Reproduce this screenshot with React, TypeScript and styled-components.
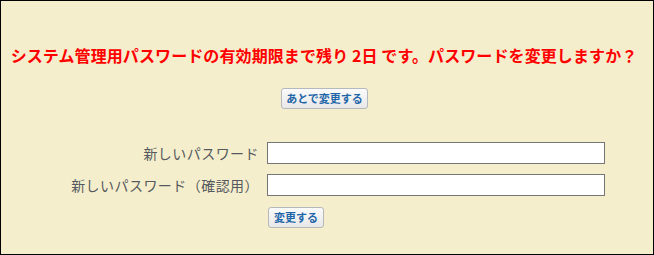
import React from "react";
import styled, { createGlobalStyle } from "styled-components";

const Global = createGlobalStyle`
  html, body { margin: 0; padding: 0; }
  body { background: #f5eecc; font-family: "Noto Sans CJK JP", "Noto Sans", sans-serif; }
`;

const Frame = styled.div`
  box-sizing: border-box;
  width: 654px;
  height: 255px;
  border: 1px solid #000;
  background: #f5eecc;
  display: flex;
  flex-direction: column;
  align-items: center;
  padding-top: 43px;
`;

const Heading = styled.p`
  margin: 0 6px 0 0;
  font-size: 16px;
  line-height: 22px;
  font-weight: bold;
  letter-spacing: 0.1px;
  color: #ff0000;
  text-align: center;
  white-space: nowrap;
`;

const Button = styled.button<{ $pad: number }>`
  box-sizing: border-box;
  height: 21px;
  padding: 0 ${(p) => p.$pad}px;
  font-family: "Noto Sans CJK JP", sans-serif;
  font-size: 11px;
  font-weight: bold;
  line-height: 19px;
  color: #1f66a8;
  background: linear-gradient(#fbfbfb, #e8e8e8);
  border: 1px solid #b5b8bd;
  border-radius: 3px;
  cursor: pointer;
`;

const LaterRow = styled.div`
  margin-top: 22px;
  margin-right: 5px;
  display: flex;
  justify-content: center;
`;

const Form = styled.form`
  align-self: stretch;
  margin-top: 33px;
  display: grid;
  grid-template-columns: 258px 338px;
  column-gap: 8px;
  row-gap: 10px;
  align-items: center;
`;

const Label = styled.label`
  justify-self: end;
  font-size: 14px;
  line-height: 22px;
  letter-spacing: 0.45px;
  color: #555a5e;
  white-space: nowrap;
`;

const Input = styled.input`
  box-sizing: border-box;
  width: 338px;
  height: 22px;
  margin: 0;
  border: 1px solid #767676;
  background: #fff;
`;

const SubmitCell = styled.div`
  grid-column: 2;
  display: flex;
  padding-left: 1px;
  margin-top: 1px;
`;

export default function App() {
  return (
    <>
      <Global />
      <Frame>
        <Heading>
          システム管理用パスワードの有効期限まで残り 2日 です。パスワードを変更しますか？
        </Heading>
        <LaterRow>
          <Button type="button" $pad={4}>
            あとで変更する
          </Button>
        </LaterRow>
        <Form onSubmit={(e) => e.preventDefault()}>
          <Label htmlFor="pw1">新しいパスワード</Label>
          <Input id="pw1" type="password" />
          <Label htmlFor="pw2">新しいパスワード（確認用）</Label>
          <Input id="pw2" type="password" />
          <SubmitCell>
            <Button type="submit" $pad={5}>
              変更する
            </Button>
          </SubmitCell>
        </Form>
      </Frame>
    </>
  );
}
